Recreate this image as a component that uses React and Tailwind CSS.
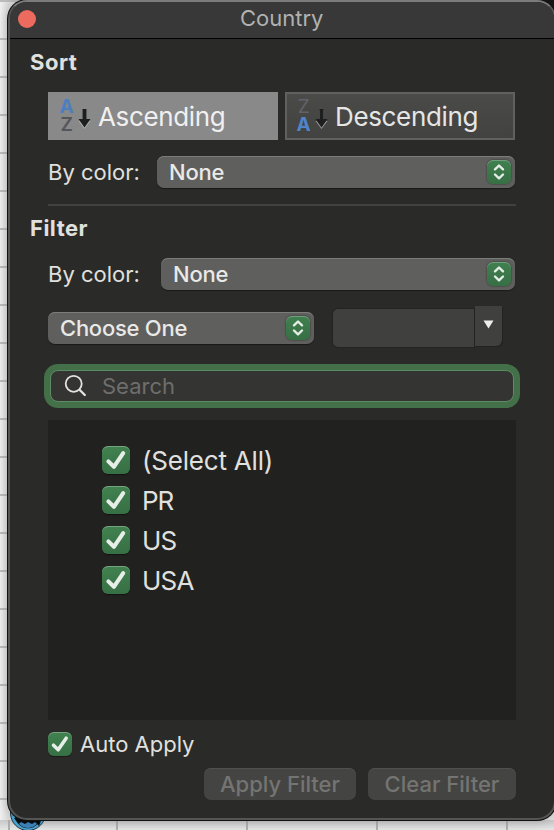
import React from 'react';

function Stepper() {
  return (
    <span className="flex h-6 w-6 items-center justify-center rounded-[6px] bg-linear-to-b from-[#40804f] to-[#376f45] shadow-[0_0_2px_rgba(0,0,0,0.6),inset_0_1px_0_rgba(255,255,255,0.25)]">
      <svg width="12" height="18" viewBox="0 0 12 18" fill="none" stroke="#e4ede6" strokeWidth="2.4" strokeLinecap="round" strokeLinejoin="round">
        <path d="M2 6.3 6 2.5l4 3.8M2 11.5l4 3.8 4-3.8" />
      </svg>
    </span>
  );
}

function Popup({ label, className }) {
  return (
    <button className={`flex h-8 items-center justify-between rounded-[7px] bg-[#5f5f5d] pl-3 pr-1 text-[22px] font-medium tracking-[-0.25px] text-[#e9e9e8] shadow-[0_1px_1px_rgba(0,0,0,0.4),inset_0_1px_0_#7c7c7a] ${className}`}>
      {label}
      <Stepper />
    </button>
  );
}

function Check({ small }) {
  return (
    <span className={`flex shrink-0 items-center justify-center rounded-[6px] bg-linear-to-b from-[#41824f] to-[#376f45] shadow-[0_1px_1px_rgba(0,0,0,0.4),inset_0_1px_0_rgba(255,255,255,0.28)] ${small ? 'h-6 w-6' : 'h-7 w-7'}`}>
      <svg className={small ? 'h-6 w-6' : 'h-7 w-7'} viewBox="0 0 28 28" fill="none" stroke="#e6eee8" strokeWidth="4.1" strokeLinecap="round" strokeLinejoin="round">
        <path d="M6.4 15.4 11.9 20.8 21.2 7.2" />
      </svg>
    </span>
  );
}

function SortIcon({ top, bottom, topClass, bottomClass }) {
  return (
    <span className="flex items-center gap-[4px]">
      <span className="flex w-[15px] flex-col items-center text-[19px] leading-[18px]">
        <span className={topClass}>{top}</span>
        <span className={bottomClass}>{bottom}</span>
      </span>
      <svg className="mt-[5px]" width="13" height="22" viewBox="0 0 13 22">
        <path d="M4.5 1h4v11h4l-6 8-6-8h4z" fill="#bbb" transform="translate(0 1)" opacity=".65" />
        <path d="M4.5 1h4v10h4l-6 8.5-6-8.5h4z" fill="#1d1e1f" />
      </svg>
    </span>
  );
}

const items = [
  { label: '(Select All)', track: 'tracking-[-0.2px]' },
  { label: 'PR', track: 'tracking-[-1px]' },
  { label: 'US', track: 'tracking-[-0.8px]' },
  { label: 'USA', track: 'tracking-[-0.8px]' },
];

export default function App() {
  return (
    <div className="relative h-[830px] w-[554px] overflow-hidden bg-[#e4e4e4] pl-[8px] font-['Inter','Liberation_Sans',sans-serif] text-[#e0e0df]">
      <div className="absolute inset-0 bg-[repeating-linear-gradient(to_bottom,#bcbcbc_0px,#bcbcbc_2px,transparent_2px,transparent_38px),linear-gradient(to_right,#f0f0f0,#dcdcdc_8px,#e2e2e2)]" />
      <div className="absolute bottom-0 left-0 flex h-[10px] w-full bg-linear-to-b from-[#c8c8c8] to-[#e6e6e6]">
        <span className="ml-[8px] w-[2px] bg-[#aeaeae]" />
        <span className="ml-[106px] w-[2px] bg-[#aeaeae]" />
        <span className="ml-[128px] w-[2px] bg-[#aeaeae]" />
        <span className="ml-[128px] w-[2px] bg-[#aeaeae]" />
        <span className="ml-[128px] w-[2px] bg-[#aeaeae]" />
      </div>
      <svg className="absolute bottom-0 left-[9px]" width="38" height="20" viewBox="0 0 38 20">
        <circle cx="19" cy="3" r="17.5" fill="#4aa8d5" stroke="#22343e" />
        <circle cx="19" cy="5" r="13" fill="#4aa8d5" stroke="#172c39" />
        <circle cx="19" cy="8" r="10" fill="#3f86bd" />
        <path d="M5 8l5 6 2-2 4 2 3-2 4 2 3-2 4 4 3-8z" fill="#080d10" />
      </svg>
      <div className="absolute right-0 top-0 h-4 w-4 bg-[#161616]" />

      <main className="relative flex h-[820px] w-[548px] flex-col rounded-[19px] border-2 border-[#555554] border-t-[#7b7b7b] bg-[#2a2a28] shadow-[0_0_0_1px_#111,0_0_12px_rgba(0,0,0,0.25)]">
        <header className="flex h-[37px] shrink-0 items-center rounded-t-[17px] border-b border-black bg-[#383838] pl-2">
          <span className="mb-[2px] h-[18px] w-[18px] rounded-full bg-[#ed6a5e]" />
          <h1 className="mb-[4px] ml-[204px] text-[22px] leading-[32px] text-[#b1b1b1]">Country</h1>
        </header>

        <h2 className="ml-5 mt-[9px] h-7 text-[22px] font-bold leading-7 tracking-[0.5px]">Sort</h2>
        <div className="ml-[38px] mt-[16px] flex h-12 shrink-0 gap-[7px] text-[26px] tracking-[-0.35px] text-[#f0f0f0]">
          <button className="flex w-[230px] items-center gap-[7px] bg-[#898989] pl-[11px]">
            <SortIcon top="A" bottom="Z" topClass="font-bold text-[#4d7ebf]" bottomClass="font-semibold text-[#55565a]" />
            <span>Ascending</span>
          </button>
          <button className="flex w-[230px] items-center gap-[7px] border-2 border-[#60605e] bg-linear-to-b from-[#4a4a48] to-[#424240] pl-[9px] text-[#e6e6e5]">
            <SortIcon top="Z" bottom="A" topClass="font-normal text-[#62636a]" bottomClass="font-bold text-[#4f84cb]" />
            <span>Descending</span>
          </button>
        </div>
        <div className="ml-[38px] mt-4 flex h-8 shrink-0 items-center text-[22px]">
          <span className="w-[109px]">By color:</span>
          <Popup label="None" className="w-[358px]" />
        </div>
        <hr className="ml-[38px] mt-4 h-[2px] w-[468px] shrink-0 border-0 bg-[#41413f]" />

        <h2 className="ml-5 mt-[8px] h-7 text-[22px] font-bold leading-7 tracking-[0.5px]">Filter</h2>
        <div className="ml-[38px] mt-[16px] flex h-8 shrink-0 items-center text-[22px]">
          <span className="w-[113px]">By color:</span>
          <Popup label="None" className="w-[354px]" />
        </div>
        <div className="ml-[38px] mt-4 flex h-[42px] shrink-0">
          <Popup label="Choose One" className="mt-[6px] w-[266px]" />
          <div className="ml-[19px] mt-[3px] h-[38px] w-[141px] rounded-l-[5px] bg-[#40403e] shadow-[0_0_0_1px_#232321]" />
          <div className="ml-[1px] flex h-10 w-[27px] justify-center rounded-br-[6px] bg-[#40403e] pt-[14px] shadow-[1px_1px_0_#222]">
            <svg width="11" height="9" viewBox="0 0 11 9"><path d="M.5.5h10l-5 8z" fill="#eee" /></svg>
          </div>
        </div>

        <div className="ml-[34px] mt-[16px] flex h-11 w-[476px] shrink-0 rounded-[14px] bg-[#437048] p-[6px]">
          <div className="flex w-full items-center rounded-[8px] border border-[#5d8b62] bg-[#343432] pl-[13px]">
            <svg width="24" height="24" viewBox="0 0 24 24" fill="none" stroke="#e2e2e2" strokeLinecap="round">
              <circle cx="9.7" cy="9.8" r="8" strokeWidth="1.8" />
              <path d="M15.8 16l5 5" strokeWidth="2.4" />
            </svg>
            <span className="ml-[14px] text-[22px] text-[#6e6e6c]">Search</span>
          </div>
        </div>

        <ul className="ml-[38px] mt-3 flex h-[300px] w-[468px] shrink-0 flex-col gap-3 bg-[#21211f] pl-[54px] pt-[26px]">
          {items.map(({ label, track }) => (
            <li key={label} className="flex h-7 items-center gap-[12px] text-[26px] leading-7">
              <Check />
              <span className={`mt-[2px] ${track}`}>{label}</span>
            </li>
          ))}
        </ul>

        <label className="ml-[38px] mt-3 flex h-6 shrink-0 items-center gap-2 text-[22px]">
          <Check small />
          <span>Auto Apply</span>
        </label>
        <footer className="ml-[194px] mt-3 flex h-8 shrink-0 gap-3 text-[22px] font-medium text-[#747472]">
          <button className="w-[152px] rounded-[7px] bg-[#444442] shadow-[inset_0_1px_0_#50504e]">Apply Filter</button>
          <button className="w-[148px] rounded-[7px] bg-[#444442] shadow-[inset_0_1px_0_#50504e]">Clear Filter</button>
        </footer>
      </main>
    </div>
  );
}
